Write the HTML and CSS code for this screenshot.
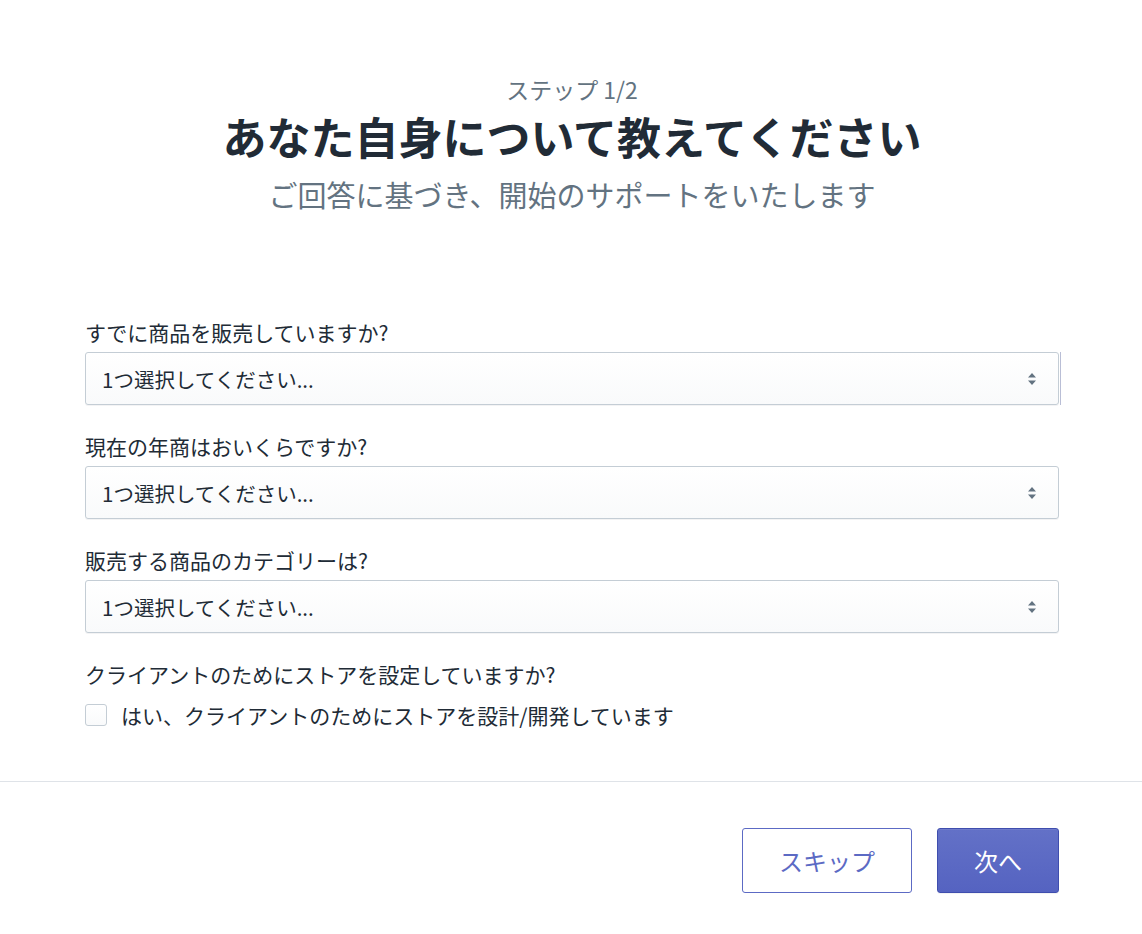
FILE: index.html
```html
<!DOCTYPE html>
<html lang="ja">
<head>
<meta charset="utf-8">
<title>ステップ 1/2</title>
<link rel="stylesheet" href="styles.css">
</head>
<body>
<div class="page">
  <header class="intro">
    <p class="step">ステップ 1/2</p>
    <h1 class="title">あなた自身について教えてください</h1>
    <p class="subtitle">ご回答に基づき、開始のサポートをいたします</p>
  </header>

  <form class="form">
    <div class="field">
      <label class="label">すでに商品を販売していますか?</label>
      <div class="select select-first">
        <span class="select-text">1つ選択してください...</span>
        <svg class="arrows" width="10" height="16" viewBox="0 0 10 16"><path d="M5 2 L9 6.5 H1 Z M5 14 L9 9.5 H1 Z" fill="#637381"/></svg>
      </div>
    </div>
    <div class="field">
      <label class="label">現在の年商はおいくらですか?</label>
      <div class="select">
        <span class="select-text">1つ選択してください...</span>
        <svg class="arrows" width="10" height="16" viewBox="0 0 10 16"><path d="M5 2 L9 6.5 H1 Z M5 14 L9 9.5 H1 Z" fill="#637381"/></svg>
      </div>
    </div>
    <div class="field">
      <label class="label">販売する商品のカテゴリーは?</label>
      <div class="select">
        <span class="select-text">1つ選択してください...</span>
        <svg class="arrows" width="10" height="16" viewBox="0 0 10 16"><path d="M5 2 L9 6.5 H1 Z M5 14 L9 9.5 H1 Z" fill="#637381"/></svg>
      </div>
    </div>
    <div class="field field-check">
      <p class="label">クライアントのためにストアを設定していますか?</p>
      <div class="check-row">
        <span class="checkbox"></span>
        <span class="check-text">はい、クライアントのためにストアを設計/開発しています</span>
      </div>
    </div>
  </form>
</div>

<footer class="footer">
  <div class="actions">
    <button class="btn btn-secondary" type="button">スキップ</button>
    <button class="btn btn-primary" type="button">次へ</button>
  </div>
</footer>
</body>
</html>
```

FILE: styles.css
```css
* { box-sizing: border-box; }

html, body {
  margin: 0;
  padding: 0;
  background: #ffffff;
}

body {
  font-family: "Noto Sans CJK JP", "Noto Sans", sans-serif;
  color: #212b36;
  width: 1142px;
  height: 934px;
  overflow: hidden;
}

.page {
  padding: 76px 83px 0 85px;
}

.intro {
  display: flex;
  flex-direction: column;
  align-items: center;
  text-align: center;
}

.step {
  margin: 0;
  font-size: 23px;
  line-height: 26px;
  color: #637381;
}

.title {
  margin: 8px 0 0;
  font-size: 44px;
  line-height: 52px;
  font-weight: 700;
  color: #212b36;
}

.subtitle {
  margin: 14px 0 0;
  font-size: 29px;
  line-height: 36px;
  color: #637381;
}

.form {
  margin-top: 106px;
  display: flex;
  flex-direction: column;
  gap: 27px;
}

.field {
  display: flex;
  flex-direction: column;
  gap: 6px;
}

.label {
  margin: 0;
  font-size: 21px;
  line-height: 28px;
  color: #212b36;
}

.select {
  position: relative;
  height: 53px;
  display: flex;
  align-items: center;
  justify-content: space-between;
  padding: 0 21px 0 16px;
  border: 1px solid #c4cdd5;
  border-radius: 3px;
  background: linear-gradient(180deg, #ffffff, #f9fafb);
  box-shadow: 0 1px 0 0 rgba(22, 29, 37, 0.05);
}

.select-first::after {
  content: "";
  position: absolute;
  right: -3px;
  top: -1px;
  bottom: -1px;
  width: 1px;
  background: #b9bed6;
}

.select-text {
  font-size: 20.5px;
  line-height: 28px;
  color: #212b36;
}

.arrows {
  display: block;
}

.field-check {
  gap: 16px;
}

.check-row {
  height: 22px;
  display: flex;
  align-items: center;
  gap: 14px;
}

.checkbox {
  width: 22px;
  height: 22px;
  border: 1px solid #c4cdd5;
  border-radius: 3px;
  background: linear-gradient(180deg, #ffffff, #f9fafb);
  flex: none;
}

.check-text {
  font-size: 21px;
  line-height: 28px;
  color: #212b36;
}

.footer {
  margin-top: 55px;
  border-top: 1px solid #dfe3e8;
  padding: 46px 83px 0 85px;
}

.actions {
  display: flex;
  justify-content: flex-end;
  gap: 25px;
}

.btn {
  height: 65px;
  border-radius: 3px;
  font-family: "Noto Sans CJK JP", "Noto Sans", sans-serif;
  font-size: 24px;
  line-height: 28px;
  cursor: pointer;
  padding: 0;
}

.btn-secondary {
  width: 170px;
  background: #ffffff;
  border: 1px solid #5c6ac4;
  color: #5c6ac4;
}

.btn-primary {
  width: 122px;
  background: linear-gradient(180deg, #6371c7, #5563c1);
  border: 1px solid #3f4eae;
  color: #ffffff;
  box-shadow: inset 0 1px 0 0 #6f7bcb, 0 1px 0 0 rgba(22, 29, 37, 0.05);
}
```
